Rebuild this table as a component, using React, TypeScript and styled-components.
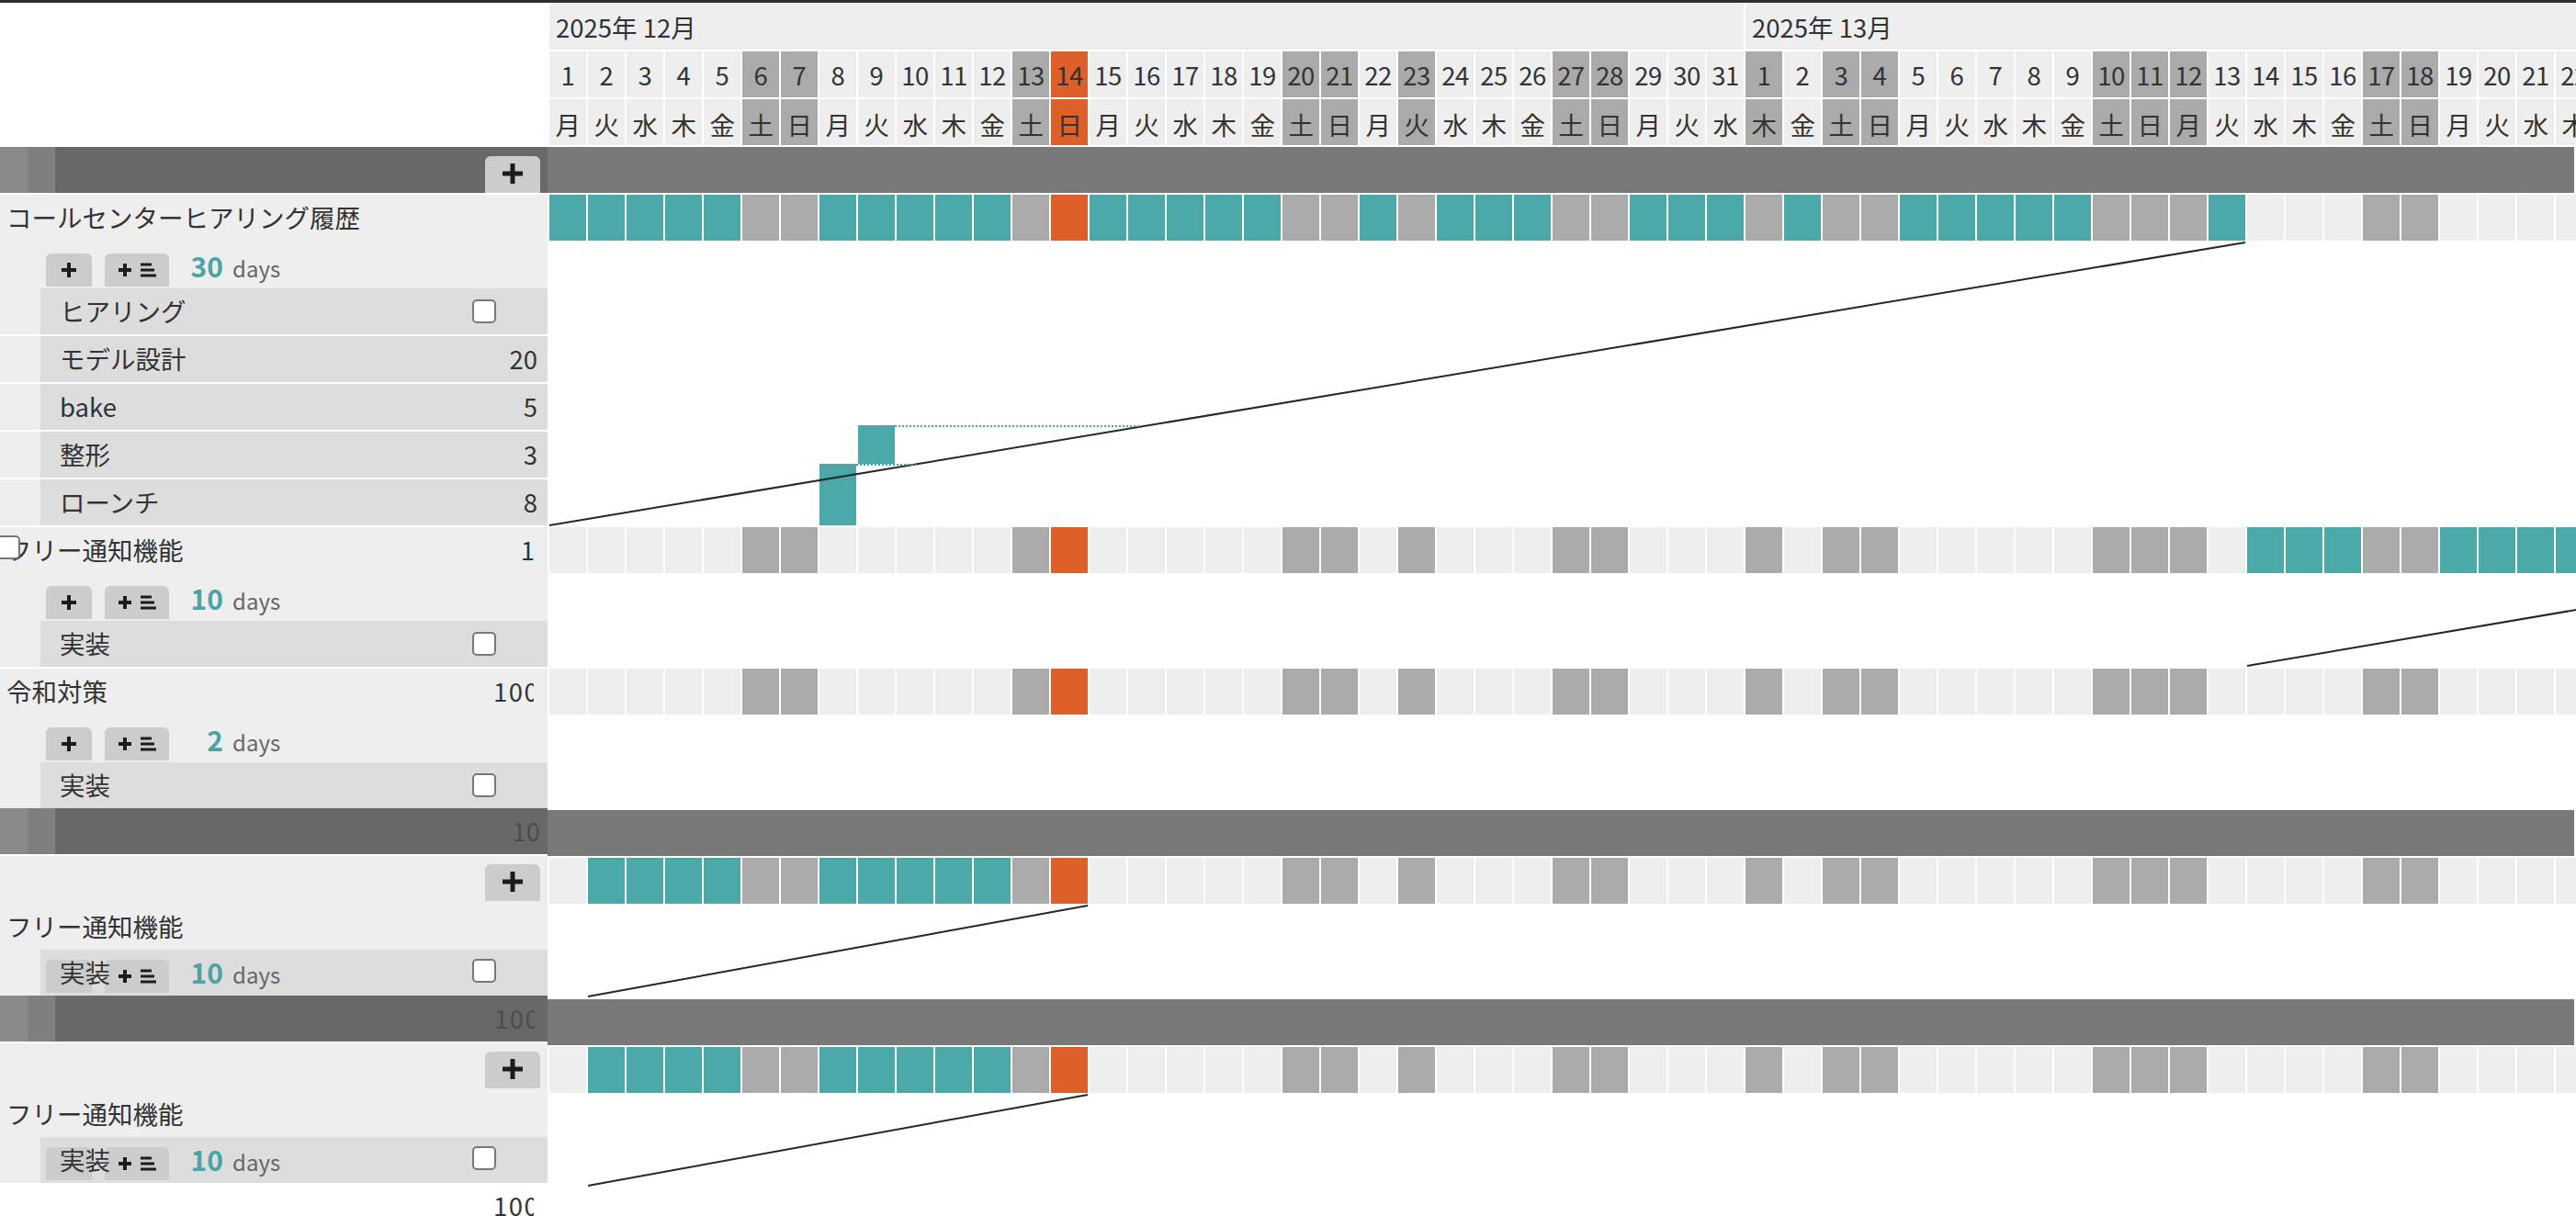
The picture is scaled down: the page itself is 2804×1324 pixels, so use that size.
import React from 'react';
import styled, { createGlobalStyle } from 'styled-components';

const GlobalStyle = createGlobalStyle`
  html, body { margin: 0; padding: 0; background: #fff; overflow: hidden; }
  * { box-sizing: border-box; }
`;

const TEAL = '#4ba8a8';
const ORANGE = '#de6028';
const OFF = '#aaaaaa';
const LIGHT = '#eeeeee';
const PITCH = 42;
const CAL_X = 598;

type Kind = 'work' | 'off' | 'today';
interface Day { d: number; w: string; kind: Kind }

const WD = ['月', '火', '水', '木', '金', '土', '日'];
function buildMonth(len: number, startWd: number, offs: number[], today?: number): Day[] {
  const out: Day[] = [];
  for (let d = 1; d <= len; d++) {
    const kind: Kind = d === today ? 'today' : offs.includes(d) ? 'off' : 'work';
    out.push({ d, w: WD[(startWd + d - 1) % 7], kind });
  }
  return out;
}
const MONTHS = [
  { label: '2025年 12月', days: buildMonth(31, 0, [6, 7, 13, 20, 21, 23, 27, 28], 14) },
  { label: '2025年 13月', days: buildMonth(31, 3, [1, 3, 4, 10, 11, 12, 17, 18, 24, 25, 31]) },
];
const DAYS: Day[] = MONTHS.flatMap((m) => m.days);

const headBg = (k: Kind) => (k === 'today' ? ORANGE : k === 'off' ? OFF : LIGHT);
const cellBg = (k: Kind, on: boolean) =>
  k === 'today' ? ORANGE : k === 'off' ? OFF : on ? TEAL : LIGHT;

/* ---------- page ---------- */
const Page = styled.div`
  position: relative;
  width: 2804px;
  height: 1324px;
  overflow: hidden;
  background: #fff;
  font-family: "Noto Sans CJK JP", "Noto Sans", sans-serif;
  font-size: 27.5px;
  color: #333;
`;
const TopRule = styled.div`
  height: 3px;
  background: #2e2e2e;
`;
const Body = styled.div`
  display: flex;
  align-items: flex-start;
  padding-top: 1px;
`;

/* ---------- left pane ---------- */
const LeftPane = styled.div`
  flex: none;
  width: 596px;
  display: flex;
  flex-direction: column;
`;
const HeaderSpacer = styled.div`
  flex: none;
  height: 156px;
`;
const DarkBar = styled.div<{ $gapAfter?: boolean }>`
  flex: none;
  height: 50px;
  display: flex;
  justify-content: flex-end;
  align-items: flex-end;
  padding-right: 8px;
  margin-bottom: ${(p) => (p.$gapAfter ? 2 : 0)}px;
  background: linear-gradient(to right, #8a8a8a 0 30px, #7f7f7f 30px 60px, #686868 60px);
`;
const DarkValue = styled.span`
  align-self: center;
  color: #4c4c4c;
  line-height: 1;
  white-space: nowrap;
`;
const ValueClip = styled.span`
  display: block;
  width: 44px;
  margin-right: 6px;
  overflow: hidden;
  white-space: nowrap;
  line-height: 1;
  letter-spacing: 1.5px;
  text-align: left;
`;
const AddBtn = styled.div`
  width: 60px;
  height: 40px;
  border-radius: 6px 6px 0 0;
  background: #cccccc;
  display: flex;
  align-items: center;
  justify-content: center;
  padding-bottom: 3px;
`;
const TaskList = styled.div`
  display: flex;
  flex-direction: column;
  gap: 2px;
`;
const TaskBlock = styled.div`
  display: flex;
  flex-direction: column;
`;
const TitleRow = styled.div`
  position: relative;
  flex: none;
  height: 50px;
  background: #eeeeee;
  display: flex;
  align-items: center;
  justify-content: space-between;
  padding: 0 9px 0 7px;
  line-height: 1;
  white-space: nowrap;
`;
const TitleValue = styled.span<{ $pr?: number }>`
  line-height: 1;
  margin-right: ${(p) => p.$pr ?? 0}px;
`;
const ButtonsRow = styled.div`
  flex: none;
  height: 52px;
  background: #eeeeee;
  display: flex;
  align-items: flex-end;
  padding: 0 0 2px 50px;
`;
const SmallBtn = styled.div<{ $w: number; $ml?: number }>`
  flex: none;
  width: ${(p) => p.$w}px;
  height: 36px;
  margin-left: ${(p) => p.$ml ?? 0}px;
  border-radius: 6px 6px 0 0;
  background: #cccccc;
  display: flex;
  align-items: center;
  justify-content: center;
  gap: 10px;
`;
const Count = styled.div`
  display: flex;
  align-items: baseline;
  margin-bottom: 8px;
`;
const CountNum = styled.span`
  width: 59px;
  text-align: right;
  font-size: 30px;
  font-weight: 700;
  color: #49a5a5;
  line-height: 1;
`;
const DaysLabel = styled.span`
  margin-left: 10px;
  font-size: 24px;
  color: #666;
  line-height: 1;
`;
const SubList = styled.div`
  display: flex;
  flex-direction: column;
  gap: 2px;
`;
const SubRow = styled.div`
  flex: none;
  height: 50px;
  display: flex;
`;
const Indent = styled.div`
  flex: none;
  width: 44px;
  background: #eeeeee;
`;
const SubBody = styled.div`
  position: relative;
  flex: 1;
  background: #dddddd;
  display: flex;
  align-items: center;
  justify-content: space-between;
  padding: 0 11px 0 21px;
  line-height: 1;
  white-space: nowrap;
`;
const OverlapBody = styled.div`
  position: relative;
  flex: 1;
  background: #dddddd;
  display: flex;
  align-items: flex-end;
  padding: 0 0 3px 6px;
  white-space: nowrap;
`;
const OverlapLabel = styled.span`
  position: absolute;
  left: 21px;
  top: 50%;
  transform: translateY(-50%);
  line-height: 1;
`;
const Check = styled.span`
  flex: none;
  display: block;
  width: 26px;
  height: 26px;
  border: 2px solid #787878;
  border-radius: 5px;
  background: #fff;
  margin-right: 45px;
`;
const FloatCheck = styled(Check)`
  position: absolute;
  margin: 0;
`;
const Section = styled.div`
  display: flex;
  flex-direction: column;
`;
const PlusRow = styled.div`
  flex: none;
  height: 52px;
  background: #eeeeee;
  display: flex;
  justify-content: flex-end;
  align-items: flex-start;
  padding: 9px 8px 0 0;
`;
const TailRow = styled.div`
  flex: none;
  height: 50px;
  display: flex;
  align-items: center;
  justify-content: flex-end;
  padding-right: 9px;
`;

/* ---------- calendar pane ---------- */
const CalPane = styled.div`
  flex: 1;
  min-width: 0;
  overflow: hidden;
  display: flex;
  flex-direction: column;
  gap: 2px;
`;
const Strip = styled.div`
  flex: none;
  height: 50px;
  display: flex;
  gap: 2px;
  padding-left: 2px;
`;
const MonthCell = styled.div<{ $days: number }>`
  flex: none;
  width: ${(p) => p.$days * PITCH - 2}px;
  height: 50px;
  background: #eeeeee;
  padding-left: 7px;
  line-height: 50px;
  white-space: nowrap;
`;
const HeadCell = styled.div<{ $bg: string; $lh?: number }>`
  flex: none;
  width: 40px;
  height: 50px;
  background: ${(p) => p.$bg};
  text-align: center;
  line-height: ${(p) => p.$lh ?? 50}px;
  white-space: nowrap;
  letter-spacing: -0.5px;
`;
const Cell = styled.div<{ $bg: string }>`
  flex: none;
  width: 40px;
  height: 50px;
  background: ${(p) => p.$bg};
`;
const CalDark = styled.div`
  flex: none;
  height: 50px;
  margin-right: 2px;
  background: #787878;
`;
const CalBlock = styled.div<{ $h: number }>`
  flex: none;
  height: ${(p) => p.$h}px;
`;

/* ---------- overlay ---------- */
const Overlay = styled.div`
  position: absolute;
  inset: 0;
  pointer-events: none;
`;
const Bar = styled.div`
  position: absolute;
  background: ${TEAL};
`;
const LinkLayer = styled.svg`
  position: absolute;
  left: 0;
  top: 0;
`;

/* ---------- icons ---------- */
const PlusIcon = ({ size, w }: { size: number; w: number }) => (
  <svg width={size} height={size} viewBox={`0 0 ${size} ${size}`}>
    <path
      d={`M${size / 2} 0V${size}M0 ${size / 2}H${size}`}
      stroke="#1c1c1c"
      strokeWidth={w}
      fill="none"
    />
  </svg>
);
const ListIcon = () => (
  <svg width={17} height={16} viewBox="0 0 17 16">
    <rect x={0} y={0.5} width={12} height={3} fill="#1c1c1c" />
    <rect x={0} y={6.5} width={15} height={3} fill="#1c1c1c" />
    <rect x={0} y={12.5} width={17} height={3} fill="#1c1c1c" />
  </svg>
);

/* ---------- pieces ---------- */
const TaskButtons = ({ n }: { n: number }) => (
  <ButtonsRow>
    <SmallBtn $w={50}>
      <PlusIcon size={16} w={4} />
    </SmallBtn>
    <SmallBtn $w={70} $ml={14}>
      <PlusIcon size={14} w={4} />
      <ListIcon />
    </SmallBtn>
    <Count>
      <CountNum>{n}</CountNum>
      <DaysLabel>days</DaysLabel>
    </Count>
  </ButtonsRow>
);

const Sub = ({ name, value, check }: { name: string; value?: string; check?: boolean }) => (
  <SubRow>
    <Indent />
    <SubBody>
      <span>{name}</span>
      {check ? <Check /> : <span>{value}</span>}
    </SubBody>
  </SubRow>
);

const OverlapSub = () => (
  <SubRow>
    <Indent />
    <OverlapBody>
      <SmallBtn $w={50} />
      <SmallBtn $w={70} $ml={14}>
        <PlusIcon size={14} w={4} />
        <ListIcon />
      </SmallBtn>
      <Count>
        <CountNum>10</CountNum>
        <DaysLabel>days</DaysLabel>
      </Count>
      <OverlapLabel>実装</OverlapLabel>
      <FloatCheck style={{ right: 56, top: 10 }} />
    </OverlapBody>
  </SubRow>
);

const SectionBlock = () => (
  <Section>
    <PlusRow>
      <AddBtn>
        <PlusIcon size={22} w={5} />
      </AddBtn>
    </PlusRow>
    <TitleRow>
      <span>フリー通知機能</span>
    </TitleRow>
    <OverlapSub />
  </Section>
);

const CellStrip = ({ from, to }: { from: number; to: number }) => (
  <Strip>
    {DAYS.map((d, i) => (
      <Cell key={i} $bg={cellBg(d.kind, i >= from && i <= to)} />
    ))}
  </Strip>
);

const colX = (idx: number) => CAL_X + idx * PITCH;

export default function App() {
  return (
    <Page>
      <GlobalStyle />
      <TopRule />
      <Body>
        <LeftPane>
          <HeaderSpacer />
          <DarkBar $gapAfter>
            <AddBtn>
              <PlusIcon size={22} w={5} />
            </AddBtn>
          </DarkBar>
          <TaskList>
            <TaskBlock>
              <TitleRow>
                <span>コールセンターヒアリング履歴</span>
              </TitleRow>
              <TaskButtons n={30} />
              <SubList>
                <Sub name="ヒアリング" check />
                <Sub name="モデル設計" value="20" />
                <Sub name="bake" value="5" />
                <Sub name="整形" value="3" />
                <Sub name="ローンチ" value="8" />
              </SubList>
            </TaskBlock>
            <TaskBlock>
              <TitleRow>
                <span>フリー通知機能</span>
                <TitleValue $pr={5}>1</TitleValue>
                <FloatCheck style={{ left: -4, top: 9 }} />
              </TitleRow>
              <TaskButtons n={10} />
              <SubList>
                <Sub name="実装" check />
              </SubList>
            </TaskBlock>
            <TaskBlock>
              <TitleRow>
                <span>令和対策</span>
                <ValueClip>100</ValueClip>
              </TitleRow>
              <TaskButtons n={2} />
              <SubList>
                <Sub name="実装" check />
              </SubList>
            </TaskBlock>
          </TaskList>
          <DarkBar $gapAfter>
            <DarkValue>10</DarkValue>
          </DarkBar>
          <SectionBlock />
          <DarkBar $gapAfter>
            <DarkValue>
              <ValueClip>100</ValueClip>
            </DarkValue>
          </DarkBar>
          <SectionBlock />
          <TailRow>
            <ValueClip>100</ValueClip>
          </TailRow>
        </LeftPane>

        <CalPane>
          <Strip>
            {MONTHS.map((m) => (
              <MonthCell key={m.label} $days={m.days.length}>
                {m.label}
              </MonthCell>
            ))}
          </Strip>
          <Strip>
            {DAYS.map((d, i) => (
              <HeadCell key={i} $bg={headBg(d.kind)}>
                {d.d}
              </HeadCell>
            ))}
          </Strip>
          <Strip>
            {DAYS.map((d, i) => (
              <HeadCell key={i} $bg={headBg(d.kind)} $lh={55}>
                {d.w}
              </HeadCell>
            ))}
          </Strip>
          <CalDark />
          <CalBlock $h={360}>
            <CellStrip from={0} to={43} />
          </CalBlock>
          <CalBlock $h={152}>
            <CellStrip from={44} to={999} />
          </CalBlock>
          <CalBlock $h={152}>
            <CellStrip from={-1} to={-1} />
          </CalBlock>
          <CalDark />
          <CalBlock $h={152}>
            <CellStrip from={1} to={12} />
          </CalBlock>
          <CalDark />
          <CalBlock $h={184}>
            <CellStrip from={1} to={12} />
          </CalBlock>
        </CalPane>
      </Body>

      <Overlay>
        <Bar style={{ left: colX(7), top: 505, width: 40, height: 67 }} />
        <Bar style={{ left: colX(8), top: 463, width: 40, height: 42 }} />
        <LinkLayer width={2804} height={1324} viewBox="0 0 2804 1324">
          <g stroke="#262626" strokeWidth={2} fill="none">
            <path d="M598 572L2444 264" />
            <path d="M2446 725L2810 663" />
            <path d="M640 1085L1184 986" />
            <path d="M640 1291L1184 1192" />
          </g>
          <g stroke="#4a9e9e" strokeWidth={2} strokeDasharray="2 2" fill="none">
            <path d="M974 464H1240" />
            <path d="M932 506H997" />
          </g>
        </LinkLayer>
      </Overlay>
    </Page>
  );
}
